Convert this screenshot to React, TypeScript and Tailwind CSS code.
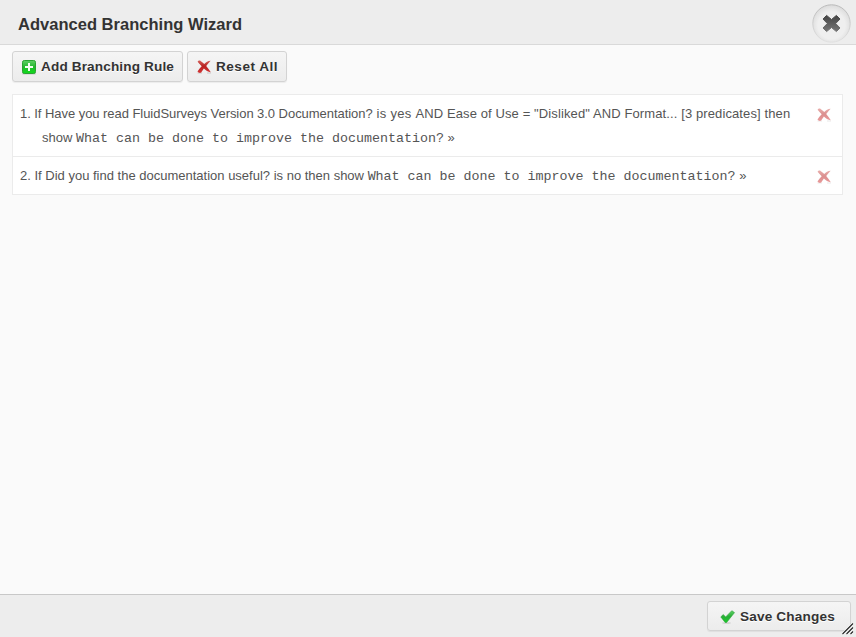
import type { ReactNode } from "react";

function PlusIcon() {
  return (
    <svg width="14" height="15" viewBox="0 0 14 15" className="mt-px shrink-0">
      <defs>
        <linearGradient id="plus" x1="0" y1="0" x2="0" y2="1">
          <stop offset="0" stopColor="#5fd066" />
          <stop offset="0.5" stopColor="#22b82c" />
          <stop offset="1" stopColor="#10dc1c" />
        </linearGradient>
      </defs>
      <rect x="0" y="13" width="14" height="1.6" rx="0.8" fill="#000" opacity="0.15" />
      <rect x="0.5" y="0.5" width="13" height="13" rx="1.8" fill="url(#plus)" stroke="#2aa232" />
      <path d="M6 3h2v3h3v2H8v3H6V8H3V6h3z" fill="#f4fff4" />
    </svg>
  );
}

function CrossIcon({ id, faded = false }: { id: string; faded?: boolean }) {
  return (
    <svg width="14" height="14" viewBox="0 0 14 14" className={faded ? "shrink-0 opacity-50" : "shrink-0"}>
      <defs>
        <linearGradient id={id} x1="0" y1="0" x2="0" y2="1">
          <stop offset="0" stopColor="#d4605a" />
          <stop offset="0.45" stopColor="#b82222" />
          <stop offset="1" stopColor="#d43434" />
        </linearGradient>
      </defs>
      <path d="M0.5 13h4.5M10 13h4" stroke="#000" strokeOpacity="0.16" strokeWidth="1.2" />
      <path
        d="M0.6 1.8C1.2 0.7 2.6 0.3 3.6 0.9C5 1.8 6.2 3 7.3 4.1C8.9 2.4 11 1 13.6 0.8C12.2 2.4 10.6 3.9 9.2 5.9C10.8 7.8 12.4 9.8 13.8 12.2C11.2 12 8.6 10.4 6.9 8.5C5.9 9.9 5.1 11.4 4.2 12.6C3 13.2 1.2 12.8 0.5 11.6C1.6 9.6 3.1 7.9 4.7 6.2C3.3 4.8 1.8 3.4 0.6 1.8Z"
        fill={"url(#" + id + ")"}
      />
    </svg>
  );
}

function CheckIcon() {
  return (
    <svg width="15" height="14" viewBox="0 0 15 14" className="shrink-0">
      <defs>
        <linearGradient id="check" x1="0" y1="0" x2="0" y2="1">
          <stop offset="0" stopColor="#5fd067" />
          <stop offset="0.5" stopColor="#28b036" />
          <stop offset="1" stopColor="#1bcb2b" />
        </linearGradient>
      </defs>
      <ellipse cx="6.5" cy="13" rx="4.5" ry="0.8" fill="#000" opacity="0.15" />
      <path d="M0.8 6.9L3.2 4.6L5.7 6.9L11.8 0.7L14.5 2.6L6.6 12.5H5.2Z" fill="url(#check)" stroke="#2ba038" strokeWidth="0.6" />
    </svg>
  );
}

function Button({ icon, className, children }: { icon: ReactNode; className: string; children: ReactNode }) {
  return (
    <button
      className={
        "flex items-center gap-[5px] rounded-[3px] border border-[#d3d3d3] bg-linear-to-b from-[#f5f5f5] to-[#ececec] text-left text-[13.6px] font-bold whitespace-nowrap text-[#333] shadow-[0_1px_1px_rgba(0,0,0,0.06)] [text-shadow:0_1px_0_#fff] " +
        className
      }
    >
      {icon}
      <span className="leading-5">{children}</span>
    </button>
  );
}

function Mono({ children }: { children: ReactNode }) {
  return <span className="font-['Liberation_Mono',monospace] text-[13.33px] tracking-normal">{children}</span>;
}

export default function App() {
  return (
    <div className="flex h-[637px] w-[856px] flex-col overflow-hidden bg-[#fafafa] font-['Liberation_Sans',Arial,sans-serif] text-[#555]">
      <header className="flex h-[45px] shrink-0 items-start justify-between border-b border-[#d9d9d9] bg-[#ededed] pr-[5px] pl-[18px]">
        <h1 className="mt-3 text-[16.5px] leading-6 font-bold tracking-[0.02px] text-[#333]">Advanced Branching Wizard</h1>
        <button aria-label="Close" className="mt-1 h-[39px] w-[39px]">
          <svg width="39" height="39" viewBox="0 0 39 39">
            <defs>
              <linearGradient id="ring" x1="0" y1="0" x2="0" y2="1">
                <stop offset="0" stopColor="#b9b9b9" />
                <stop offset="1" stopColor="#e1e1e1" />
              </linearGradient>
              <radialGradient id="disc" cx="0.5" cy="0.55" r="0.52">
                <stop offset="0.7" stopColor="#efefef" />
                <stop offset="1" stopColor="#dedede" />
              </radialGradient>
              <linearGradient id="x" x1="0" y1="0" x2="0" y2="1">
                <stop offset="0" stopColor="#444" />
                <stop offset="1" stopColor="#777" />
              </linearGradient>
            </defs>
            <circle cx="19.5" cy="19.5" r="18.7" fill="url(#disc)" stroke="url(#ring)" />
            <path
              d="M14.6 11.4L19.5 15.5L24.4 11.4L28 15L23.7 19.5L28 24L24.4 27.6L19.5 23.5L14.6 27.6L11 24L15.3 19.5L11 15Z"
              fill="url(#x)"
              stroke="url(#x)"
              strokeWidth="1"
              strokeLinejoin="round"
            />
          </svg>
        </button>
      </header>

      <main className="flex min-h-0 flex-1 flex-col pt-1.5 pr-[13px] pl-3">
        <div className="flex gap-1">
          <Button className="h-[31px] w-[171px] pl-[9px] tracking-[0.13px]" icon={<PlusIcon />}>
            Add Branching Rule
          </Button>
          <Button className="h-[31px] w-[100px] pl-[9px] tracking-[0.48px]" icon={<CrossIcon id="reset" />}>
            Reset All
          </Button>
        </div>

        <ol className="mt-3 border border-[#ebebeb] bg-white text-[13px] leading-6">
          <li className="flex h-[62px] items-start justify-between border-b border-[#ebebeb] pt-[7px] pr-[11px] pl-[7px]">
            <div className="whitespace-nowrap">
              <div>
                <span className="tracking-[-0.05px]">1. If Have you read FluidSurveys Version 3.0 Documentation?</span>
                <span className="tracking-[0.3px]"> is yes </span>
                <span className="tracking-[0.11px]">
                  AND Ease of Use = "Disliked" AND Format... [3 predicates] then
                </span>
              </div>
              <div className="pl-[22px]">
                show <Mono>What can be done to improve the documentation?</Mono> »
              </div>
            </div>
            <button aria-label="Delete rule 1" className="mt-1.5">
              <CrossIcon id="del1" faded />
            </button>
          </li>
          <li className="flex h-[37px] items-start justify-between pt-[7px] pr-[11px] pl-[7px]">
            <div className="whitespace-nowrap">
              2. If Did you find the documentation useful? is no then show{" "}
              <Mono>What can be done to improve the documentation?</Mono> »
            </div>
            <button aria-label="Delete rule 2" className="mt-1.5">
              <CrossIcon id="del2" faded />
            </button>
          </li>
        </ol>
      </main>

      <footer className="relative flex h-[43px] shrink-0 items-start justify-end border-t border-[#c8c8c8] bg-[#ededed] pt-1.5 pr-[5px]">
        <Button className="h-[30px] w-[144px] pt-px pl-3 tracking-[0.17px]" icon={<CheckIcon />}>
          Save Changes
        </Button>
        <svg width="12" height="12" viewBox="0 0 12 12" className="absolute right-[2px] bottom-[2px]">
          <path d="M0.5 11L11 0.5M4.5 11L11 4.5M8.5 11L11 8.5" stroke="#fff" strokeWidth="2.4" />
          <path d="M0.5 11L11 0.5M4.5 11L11 4.5M8.5 11L11 8.5" stroke="#222" strokeWidth="1.1" />
        </svg>
      </footer>
    </div>
  );
}
